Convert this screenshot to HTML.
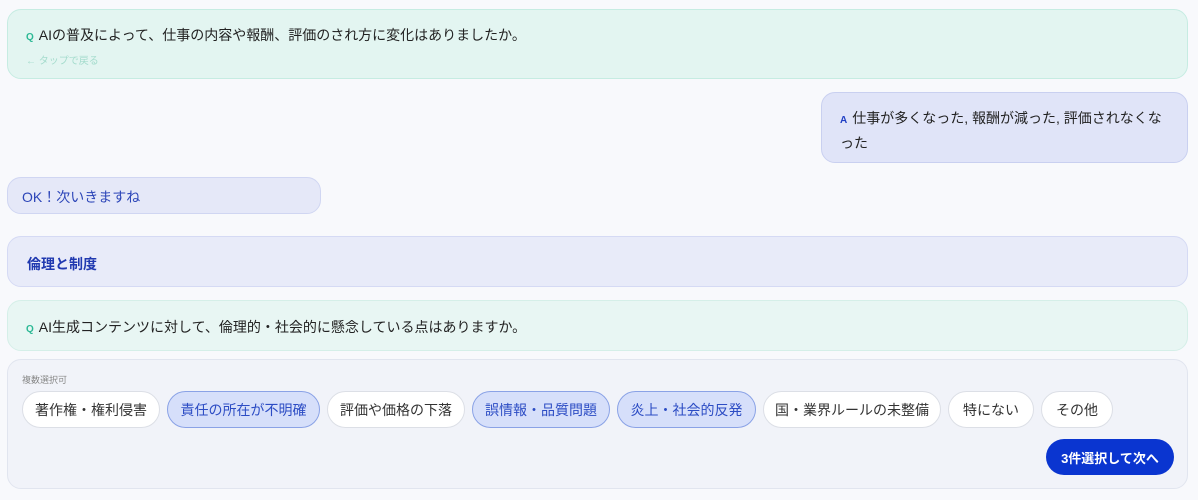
<!DOCTYPE html>
<html><head><meta charset="utf-8"><style>
*{box-sizing:border-box;margin:0;padding:0}
body{width:1198px;height:500px;background:#f8f9fc;font-family:"Liberation Sans","Noto Sans CJK JP",sans-serif;position:relative;overflow:hidden;color:#222}
.b{position:absolute;border-radius:14px}
.q{background:#e3f5f1;border:1px solid #c6ece2;left:7px;width:1181px}
.qt{position:absolute;left:18px;font-size:14px;color:#222}
.qt b{color:#2bb894;font-size:10px;margin-right:5px}
.chip{position:absolute;top:391px;height:37px;border-radius:19px;border:1px solid #dcdfe6;background:#fff;font-size:14px;color:#333;display:flex;align-items:center;justify-content:center}
.sel{background:#d6dffa;border:1px solid #8aa2e6;color:#2c4cc4}
</style></head><body>
<div class="b q" style="top:9px;height:70px">
<div class="qt" style="top:15px"><b>Q</b>AIの普及によって、仕事の内容や報酬、評価のされ方に変化はありましたか。</div>
<div style="position:absolute;left:18px;top:42px;font-size:10px;color:#a5dccd">← タップで戻る</div>
</div>
<div class="b" style="left:821px;top:92px;width:367px;height:71px;background:#e0e4f8;border:1px solid #c9d0f0">
<div style="position:absolute;left:18px;top:14px;right:18px;font-size:14px;line-height:22px;color:#222"><b style="color:#1f3fc4;font-size:10px;margin-right:5px">A</b>仕事が多くなった, 報酬が減った, 評価されなくなった</div>
</div>
<div class="b" style="left:7px;top:177px;width:314px;height:37px;background:#e5e8f8;border:1px solid #d0d6f2">
<div style="position:absolute;left:14px;top:9px;font-size:14px;color:#2c45b8">OK！次いきますね</div>
</div>
<div class="b" style="left:7px;top:236px;width:1181px;height:51px;background:#e8ebf9;border:1px solid #d5daf4">
<div style="position:absolute;left:19px;top:17px;font-size:14px;font-weight:bold;color:#2039b0">倫理と制度</div>
</div>
<div class="b q" style="top:300px;height:51px;background:#e8f6f3;border-color:#d5efe8">
<div class="qt" style="top:16px"><b>Q</b>AI生成コンテンツに対して、倫理的・社会的に懸念している点はありますか。</div>
</div>
<div class="b" style="left:7px;top:359px;width:1181px;height:130px;background:#f1f3f9;border:1px solid #e1e5ef">
<div style="position:absolute;left:14px;top:13px;font-size:9px;color:#888">複数選択可</div>
</div>
<div class="chip" style="left:22px;width:138px">著作権・権利侵害</div>
<div class="chip sel" style="left:167px;width:153px">責任の所在が不明確</div>
<div class="chip" style="left:327px;width:138px">評価や価格の下落</div>
<div class="chip sel" style="left:472px;width:138px">誤情報・品質問題</div>
<div class="chip sel" style="left:617px;width:139px">炎上・社会的反発</div>
<div class="chip" style="left:763px;width:178px">国・業界ルールの未整備</div>
<div class="chip" style="left:948px;width:86px">特にない</div>
<div class="chip" style="left:1041px;width:72px">その他</div>
<div style="position:absolute;left:1046px;top:439px;width:128px;height:36px;border-radius:18px;background:#0a35d0;color:#fff;font-size:13px;font-weight:bold;display:flex;align-items:center;justify-content:center">3件選択して次へ</div>
</body></html>
